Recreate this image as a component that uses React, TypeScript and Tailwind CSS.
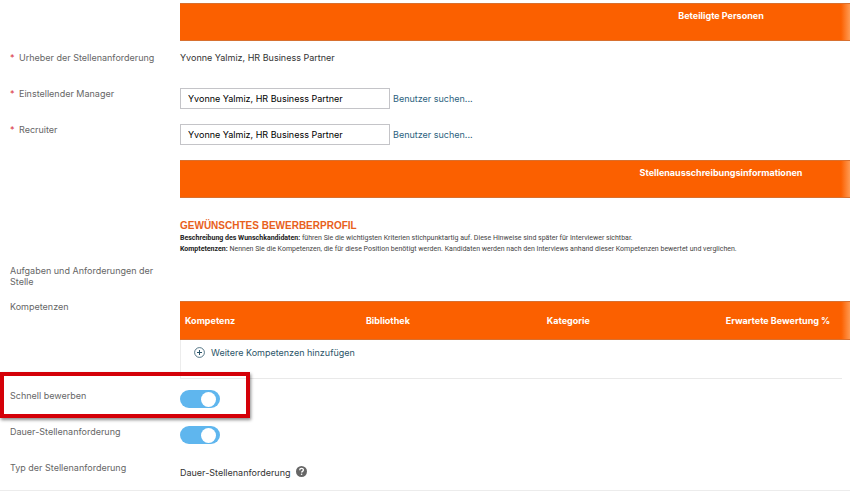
import type { ReactNode } from "react";

const PERSON = "Yvonne Yalmiz, HR Business Partner";

function Banner({ title }: { title: string }) {
  return (
    <div className="ml-[180px] flex h-[38px] justify-end border-y border-[#d8702f] bg-[linear-gradient(to_left,#ff9a52,#fb6000_9px)]">
      <h2 className="w-[258px] pt-[5px] text-center text-[9px] leading-[13px] font-bold text-white">
        {title}
      </h2>
    </div>
  );
}

type RowProps = {
  label: string;
  htmlFor?: string;
  required?: boolean;
  children?: ReactNode;
};

function Row({ label, htmlFor, required, children }: RowProps) {
  const Label = htmlFor ? "label" : "span";
  return (
    <div className="grid min-h-9 grid-cols-[180px_1fr]">
      <div className="flex gap-1 pt-[11px] pr-4 pl-[10px] text-[9px] leading-[11px] text-[#666]">
        {required && <span className="w-[5px] text-[#d9303a]">*</span>}
        <Label htmlFor={htmlFor}>{label}</Label>
      </div>
      <div className="min-w-0 pt-[11px]">{children}</div>
    </div>
  );
}

function UserField({ id }: { id: string }) {
  return (
    <div className="flex items-center gap-[3px]">
      <input
        id={id}
        type="text"
        defaultValue={PERSON}
        className="h-[21px] w-[210px] border border-[#c4c4c8] bg-white px-[7px] text-[9px] text-black"
      />
      <a href="#" className="text-[9px] leading-[13px] text-[#2b5f7e]">
        Benutzer suchen...
      </a>
    </div>
  );
}

function Toggle({ id }: { id: string }) {
  return (
    <input
      id={id}
      type="checkbox"
      role="switch"
      defaultChecked
      className="flex h-[18px] w-10 appearance-none items-center rounded-full bg-[#a5a5a5] px-1 before:size-[15px] before:rounded-full before:bg-white checked:justify-end checked:bg-[#5fb6ee]"
    />
  );
}

function CompetencyTable() {
  return (
    <div className="border-l border-[#ececec]">
      <table className="-ml-px w-[calc(100%+1px)] table-fixed border-collapse text-left text-[9px] leading-[13px]">
        <thead>
          <tr className="h-[38px] border-y border-[#d8702f] bg-[linear-gradient(to_left,#ff9a52,#fb6000_9px)] text-white">
            <th className="w-[27%] pl-[5px] font-bold">Kompetenz</th>
            <th className="w-[27%] pl-[5px] font-bold">Bibliothek</th>
            <th className="w-[27%] pl-[5px] font-bold">Kategorie</th>
            <th className="pl-[3px] font-bold whitespace-nowrap">
              Erwartete Bewertung %
            </th>
          </tr>
        </thead>
      </table>
      <div className="mr-2 h-[39px] border-b border-[#e9e9e9] pt-[6px] pl-[13px]">
        <button
          type="button"
          className="flex items-center gap-[6px] text-[9px] leading-[13px] text-[#2b5468]"
        >
          <svg
            width={11}
            height={11}
            viewBox="0 0 11 11"
            fill="none"
            stroke="currentColor"
          >
            <circle cx="5.5" cy="5.5" r="4.9" strokeWidth={0.8} />
            <path d="M5.5 3v5M3 5.5h5" />
          </svg>
          Weitere Kompetenzen hinzufügen
        </button>
      </div>
    </div>
  );
}

export default function App() {
  return (
    <main className="border-b border-[#ececec] bg-white pt-[3px] font-['Inter','Noto_Sans',sans-serif]">
      <Banner title="Beteiligte Personen" />
      <Row label="Urheber der Stellenanforderung" required>
        <p className="text-[9px] leading-3 text-[#333]">{PERSON}</p>
      </Row>
      <Row label="Einstellender Manager" htmlFor="manager" required>
        <UserField id="manager" />
      </Row>
      <Row label="Recruiter" htmlFor="recruiter" required>
        <UserField id="recruiter" />
      </Row>

      <div className="mt-[11px]">
        <Banner title="Stellenausschreibungsinformationen" />
      </div>
      <section className="mt-[21px] ml-[180px] font-['Roboto','Noto_Sans',sans-serif] text-[7px] leading-[11px] text-[#444]">
        <h3 className="font-['Liberation_Sans',Arial,sans-serif] text-[10px] leading-[14px] font-bold text-[#e8601c]">
          GEWÜNSCHTES BEWERBERPROFIL
        </h3>
        <p>
          <b className="text-[#222]">Beschreibung des Wunschkandidaten:</b>{" "}
          führen Sie die wichtigsten Kriterien stichpunktartig auf. Diese
          Hinweise sind später für Interviewer sichtbar.
        </p>
        <p>
          <b className="text-[#222]">Komptetenzen:</b> Nennen Sie die
          Kompetenzen, die für diese Position benötigt werden. Kandidaten werden
          nach den Interviews anhand dieser Kompetenzen bewertet und verglichen.
        </p>
      </section>

      <div className="-mt-px">
        <Row label="Aufgaben und Anforderungen der Stelle" />
      </div>
      <Row label="Kompetenzen">
        <CompetencyTable />
      </Row>
      <div className="relative">
        <Row label="Schnell bewerben" htmlFor="quick-apply">
          <Toggle id="quick-apply" />
        </Row>
        <div className="pointer-events-none absolute -top-[7px] left-0 h-[46px] w-[250px] border-4 border-[#d40008] shadow-[1px_2px_3px_rgba(0,0,0,0.45)]" />
      </div>
      <Row label="Dauer-Stellenanforderung" htmlFor="evergreen">
        <Toggle id="evergreen" />
      </Row>
      <Row label="Typ der Stellenanforderung">
        <div className="flex h-7 items-start gap-[6px] pt-1 text-[9px] leading-[13px] text-[#333]">
          Dauer-Stellenanforderung
          <button type="button" aria-label="Hilfe">
            <svg width={11} height={11} viewBox="0 0 11 11" fill="none">
              <circle cx="5.5" cy="5.5" r="5.5" fill="#666" />
              <path
                d="M3.7 4.2c0-2.3 3.7-2.3 3.7-.1 0 1.3-1.8 1.2-1.8 2.5"
                stroke="white"
                strokeWidth={1.3}
              />
              <circle cx="5.6" cy="8.3" r=".8" fill="white" />
            </svg>
          </button>
        </div>
      </Row>
    </main>
  );
}
